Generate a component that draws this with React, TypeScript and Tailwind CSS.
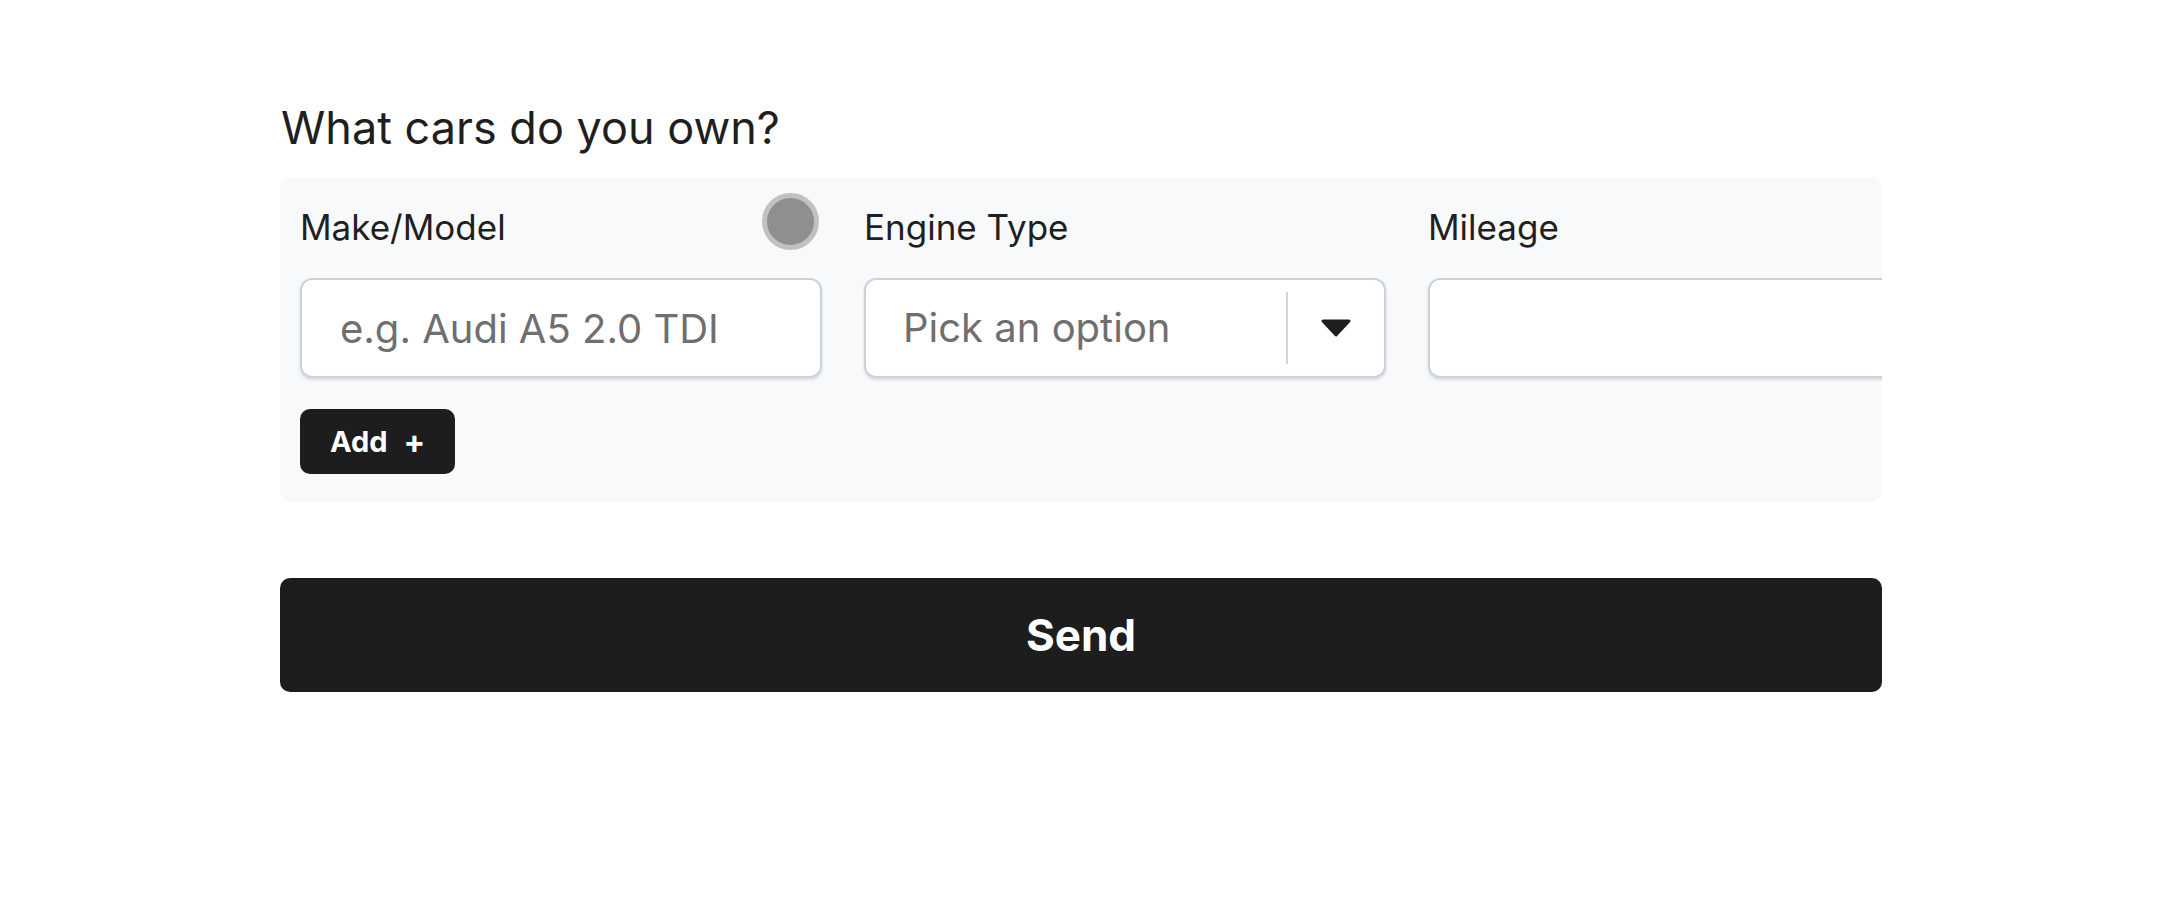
import React from "react";

function Label({ text, dot }: { text: string; dot?: boolean }) {
  return (
    <div className="flex h-[57px] items-center justify-between">
      <span className="pt-[11px] text-[35px] leading-[43px] text-[#1f1f1f]">{text}</span>
      {dot && (
        <div className="mr-[3px] h-[57px] w-[57px] rounded-full border-[5px] border-[#c1c1c1] bg-[#8f8f8f]" />
      )}
    </div>
  );
}

const boxCls =
  "mt-[28px] h-[100px] w-full rounded-[12px] border-2 border-[#ccd2da] bg-white shadow-[0_2px_3px_rgba(0,0,0,0.12)]";

export default function App() {
  return (
    <div className="min-h-[900px] bg-white pl-[280px] pt-[101px] font-['Inter',sans-serif]">
      <div className="w-[1602px]">
        <h2 className="mb-[22px] pl-[1px] text-[45px] leading-[54px] text-[#1f1f1f]">What cars do you own?</h2>
        <div className="overflow-hidden rounded-[12px] bg-[#f8f9fb] px-[20px] pb-[28px] pt-[16px]">
          <div className="flex gap-[42px]">
            <div className="w-[522px] shrink-0">
              <Label text="Make/Model" dot />
              <input
                className={boxCls + " px-[38px] text-[40px] text-[#1f1f1f] outline-none placeholder:text-[#6f6f6f]"}
                placeholder="e.g. Audi A5 2.0 TDI"
              />
            </div>
            <div className="w-[522px] shrink-0">
              <Label text="Engine Type" />
              <div className={boxCls + " flex items-center"}>
                <span className="flex-1 pl-[37px] text-[40px] text-[#6f6f6f]">Pick an option</span>
                <div className="h-[72px] w-[2px] bg-[#cfd4dc]" />
                <div className="flex w-[96px] items-center justify-center">
                  <svg width="32" height="20" viewBox="0 0 32 20">
                    <path d="M3 3 H29 L16 17 Z" fill="#1f1f1f" stroke="#1f1f1f" strokeWidth="3" strokeLinejoin="round" />
                  </svg>
                </div>
              </div>
            </div>
            <div className="w-[522px] shrink-0">
              <Label text="Mileage" />
              <input className={boxCls + " px-[38px] text-[40px] text-[#1f1f1f] outline-none"} />
            </div>
          </div>
          <button className="mt-[31px] flex h-[65px] items-center gap-[16px] rounded-[10px] bg-[#1d1d1d] px-[30px] text-[29px] font-bold text-white">
            <span>Add</span>
            <span className="text-[32px]">+</span>
          </button>
        </div>
        <button className="mt-[76px] flex h-[114px] w-full items-center justify-center rounded-[10px] bg-[#1d1d1d] text-[44px] font-bold text-white">
          Send
        </button>
      </div>
    </div>
  );
}
